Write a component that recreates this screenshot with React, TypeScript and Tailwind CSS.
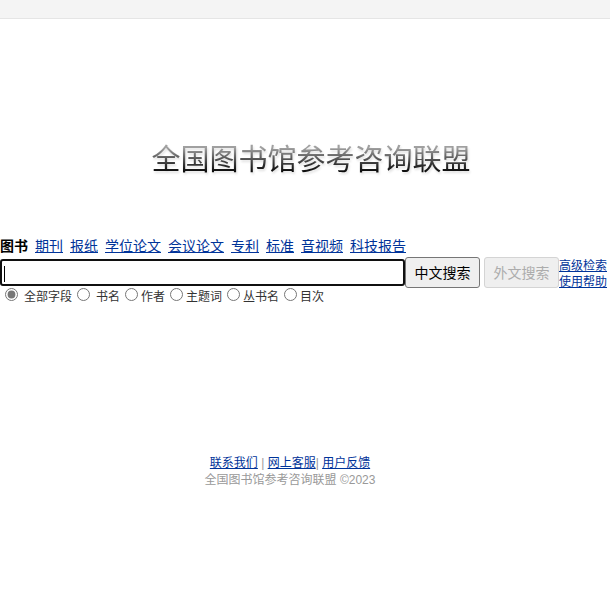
import { useState } from "react";

/* ------------------------------- Data ------------------------------------ */
const CHANNELS = ["图书", "期刊", "报纸", "学位论文", "会议论文", "专利", "标准", "音视频", "科技报告"];

const FIELDS = [
  { value: "all", label: "全部字段", wide: true },
  { value: "title", label: "书名", wide: true },
  { value: "author", label: "作者", wide: false },
  { value: "subject", label: "主题词", wide: false },
  { value: "series", label: "丛书名", wide: false },
  { value: "toc", label: "目次", wide: false },
];

const LINK = "text-[#003399] underline";

/* ------------------------------ Channels --------------------------------- */
function ChannelNav() {
  return (
    <nav className="flex gap-[7px] text-sm leading-[22px] whitespace-nowrap">
      {CHANNELS.map((name, i) =>
        i === 0 ? (
          <b key={name} className="text-black">{name}</b>
        ) : (
          <a key={name} href="#" className={LINK}>{name}</a>
        )
      )}
    </nav>
  );
}

/* ----------------------------- Search form ------------------------------- */
function SearchForm() {
  const [keyword, setKeyword] = useState("");
  const [field, setField] = useState("all");

  return (
    <form onSubmit={(e) => e.preventDefault()}>
      <div className="flex h-[31px] items-center">
        <div className="relative min-w-0 max-w-[405px] flex-1">
          <input
            type="text"
            aria-label="检索词"
            value={keyword}
            onChange={(e) => setKeyword(e.target.value)}
            className="block h-[27px] w-full rounded-[3px] border-2 border-[#101010] bg-white px-1 text-base text-black outline-none"
          />
          {keyword === "" && <span aria-hidden className="absolute top-[7px] left-1 h-4 w-px bg-black" />}
        </div>
        <button type="submit" className="h-[31px] w-[75px] shrink-0 rounded-[3px] border border-[#767676] bg-[#efefef] pt-px text-sm text-black">
          中文搜索
        </button>
        <button type="button" disabled className="ml-1 h-[31px] w-[75px] shrink-0 rounded-[3px] border border-[#d4d4d4] bg-[#efefef] pt-px text-sm text-[#acacac]">
          外文搜索
        </button>
        <div className="flex shrink-0 flex-col pt-[3px] text-xs leading-4">
          <a href="#" className={LINK}>高级检索</a>
          <a href="#" className={LINK}>使用帮助</a>
        </div>
      </div>

      <div className="flex gap-[5px] pl-[5px] text-xs leading-[18px] text-[#333333]">
        {FIELDS.map((f) => (
          <label key={f.value} className={`flex items-start whitespace-nowrap ${f.wide ? "gap-[6px]" : "gap-[3px]"}`}>
            <input
              type="radio"
              name="field"
              value={f.value}
              checked={field === f.value}
              onChange={() => setField(f.value)}
              className="h-[13px] w-[13px] accent-[#767676]"
            />
            {f.label}
          </label>
        ))}
      </div>
    </form>
  );
}

/* -------------------------------- Page ----------------------------------- */
export default function App() {
  return (
    <div className="bg-white font-['Liberation_Sans','Noto_Sans_CJK_SC',sans-serif] text-[#333333]">
      <div className="h-[19px] border-b border-[#e5e5e5] bg-[#f4f4f4]" />

      <header className="pt-[121px] pl-3 text-center">
        <h1 className="inline-block bg-linear-to-b from-[#a0a0a0] from-20% to-[#0a0a0a] to-80% bg-clip-text text-[29px] leading-10 text-transparent drop-shadow-[1px_2px_1px_rgba(0,0,0,0.12)]">
          全国图书馆参考咨询联盟
        </h1>
      </header>

      <main className="pt-[55px]">
        <ChannelNav />
        <SearchForm />
      </main>

      <footer className="pt-[149px] pr-[30px] text-center text-xs leading-[17px] text-[#999999]">
        <p>
          <a href="#" className={LINK}>联系我们</a> | <a href="#" className={LINK}>网上客服</a>| <a href="#" className={LINK}>用户反馈</a>
        </p>
        <p>全国图书馆参考咨询联盟 ©2023</p>
      </footer>
    </div>
  );
}
